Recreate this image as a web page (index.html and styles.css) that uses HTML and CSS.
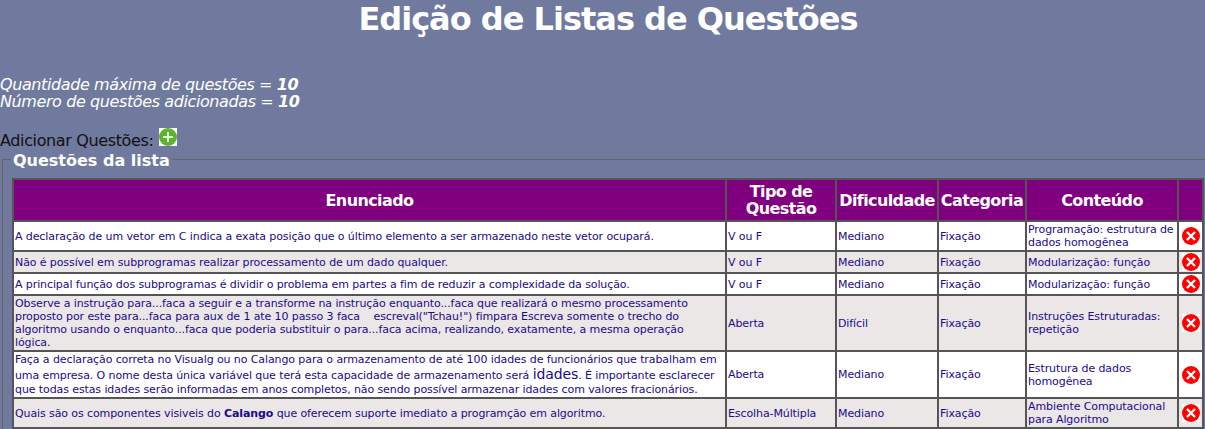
FILE: index.html
```html
<!DOCTYPE html>
<html lang="pt-BR">
<head>
    <meta charset="UTF-8">
    <title>Edição de Listas de Questões</title>
    <link rel="stylesheet" href="styles.css">
</head>
<body>

    <h1 class="title">Edição de Listas de Questões</h1>

    <p class="counts">
        Quantidade máxima de questões = <strong>10</strong><br>
        Número de questões adicionadas = <strong>10</strong>
    </p>

    <p class="add">Adicionar Questões:
        <svg class="add-icon" viewBox="0 0 18 18" width="18" height="18">
            <rect width="18" height="18" fill="#fff"/>
            <circle cx="9" cy="9" r="9" fill="#5cb531"/>
            <path d="M9 4v10M4 9h10" stroke="#e4f5da" stroke-width="2"/>
        </svg>
    </p>

    <fieldset class="box">
        <legend>Questões da lista</legend>
        <table class="questions">
            <colgroup>
                <col class="c-text"><col class="c-type"><col class="c-level"><col class="c-cat"><col class="c-subject"><col class="c-del">
            </colgroup>
            <thead>
                <tr class="head">
                    <th>Enunciado</th>
                    <th>Tipo de Questão</th>
                    <th>Dificuldade</th>
                    <th>Categoria</th>
                    <th>Conteúdo</th>
                    <th></th>
                </tr>
            </thead>
            <tbody>
                <tr class="r1">
                    <td>A declaração de um vetor em C indica a exata posição que o último elemento a ser armazenado neste vetor ocupará.</td>
                    <td>V ou F</td><td>Mediano</td><td>Fixação</td>
                    <td>Programação: estrutura de dados homogênea</td>
                    <td class="del"><svg viewBox="0 0 18 18" width="18" height="18"><rect width="18" height="18" fill="#fff"/><circle cx="9" cy="9" r="9" fill="#f00"/><path d="M5 5l8 8M13 5l-8 8" stroke="#fff" stroke-width="2.400"/></svg></td>
                </tr>
                <tr class="alt r2">
                    <td>Não é possível em subprogramas realizar processamento de um dado qualquer.</td>
                    <td>V ou F</td><td>Mediano</td><td>Fixação</td>
                    <td>Modularização: função</td>
                    <td class="del"><svg viewBox="0 0 18 18" width="18" height="18"><rect width="18" height="18" fill="#fff"/><circle cx="9" cy="9" r="9" fill="#f00"/><path d="M5 5l8 8M13 5l-8 8" stroke="#fff" stroke-width="2.400"/></svg></td>
                </tr>
                <tr class="r2">
                    <td>A principal função dos subprogramas é dividir o problema em partes a fim de reduzir a complexidade da solução.</td>
                    <td>V ou F</td><td>Mediano</td><td>Fixação</td>
                    <td>Modularização: função</td>
                    <td class="del"><svg viewBox="0 0 18 18" width="18" height="18"><rect width="18" height="18" fill="#fff"/><circle cx="9" cy="9" r="9" fill="#f00"/><path d="M5 5l8 8M13 5l-8 8" stroke="#fff" stroke-width="2.400"/></svg></td>
                </tr>
                <tr class="alt">
                    <td>Observe a instrução para...faca a seguir e a transforme na instrução enquanto...faca que realizará o mesmo processamento proposto por este para...faca para aux de 1 ate 10 passo 3 faca &nbsp;&nbsp; escreval("Tchau!") fimpara Escreva somente o trecho do algoritmo usando o enquanto...faca que poderia substituir o para...faca acima, realizando, exatamente, a mesma operação lógica.</td>
                    <td>Aberta</td><td>Difícil</td><td>Fixação</td>
                    <td>Instruções Estruturadas: repetição</td>
                    <td class="del"><svg viewBox="0 0 18 18" width="18" height="18"><rect width="18" height="18" fill="#fff"/><circle cx="9" cy="9" r="9" fill="#f00"/><path d="M5 5l8 8M13 5l-8 8" stroke="#fff" stroke-width="2.400"/></svg></td>
                </tr>
                <tr>
                    <td>Faça a declaração correta no Visualg ou no Calango para o armazenamento de até 100 idades de funcionários que trabalham em uma empresa. O nome desta única variável que terá esta capacidade de armazenamento será <span class="big">idades</span>. É importante esclarecer que todas estas idades serão informadas em anos completos, não sendo possível armazenar idades com valores fracionários.</td>
                    <td>Aberta</td><td>Mediano</td><td>Fixação</td>
                    <td>Estrutura de dados homogênea</td>
                    <td class="del"><svg viewBox="0 0 18 18" width="18" height="18"><rect width="18" height="18" fill="#fff"/><circle cx="9" cy="9" r="9" fill="#f00"/><path d="M5 5l8 8M13 5l-8 8" stroke="#fff" stroke-width="2.400"/></svg></td>
                </tr>
                <tr class="alt">
                    <td>Quais são os componentes visiveis do <strong>Calango</strong> que oferecem suporte imediato a programção em algoritmo.</td>
                    <td>Escolha-Múltipla</td><td>Mediano</td><td>Fixação</td>
                    <td>Ambiente Computacional para Algoritmo</td>
                    <td class="del"><svg viewBox="0 0 18 18" width="18" height="18"><rect width="18" height="18" fill="#fff"/><circle cx="9" cy="9" r="9" fill="#f00"/><path d="M5 5l8 8M13 5l-8 8" stroke="#fff" stroke-width="2.400"/></svg></td>
                </tr>
            </tbody>
        </table>
    </fieldset>

</body>
</html>
```

FILE: styles.css
```css
body {
    margin: 0;
    background-color: #6f7a9e;
    font-family: "DejaVu Sans", Verdana, sans-serif;
    font-size: 16px;
    color: #111;
    overflow: hidden;
}
.title {
    margin: 0;
    padding-left: 11px;
    height: 76px;
    font-size: 32px;
    line-height: 38px;
    letter-spacing: -1px;
    text-align: center;
    color: #fff;
}
.counts {
    margin: 0;
    height: 35px;
    font-size: 16px;
    line-height: 17px;
    letter-spacing: -0.4px;
    font-style: italic;
    color: #fff;
}
.add {
    margin: 0;
    padding-top: 20px;
    height: 18px;
    font-size: 16px;
    line-height: 19px;
    letter-spacing: -0.37px;
}
.add-icon {
    margin: -4px 0 0 1px;
    vertical-align: baseline;
}
.box {
    margin: 0 -10px 0 2px;
    padding: 0 1px 0 9px;
    border: 1px solid #666;
}
.box legend {
    margin-left: -1px;
    padding: 2px 2px 0;
    font-size: 16px;
    font-weight: bold;
    line-height: 19px;
    color: #fff;
}
.questions {
    width: 1190px;
    table-layout: fixed;
    border-collapse: collapse;
    margin-top: 8px;
    font-size: 11px;
    line-height: 13px;
    letter-spacing: -0.1px;
    color: #1a0a8c;
}
.c-text { width: 713px; }
.c-type { width: 110px; }
.c-level { width: 102px; }
.c-cat { width: 88px; }
.c-subject { width: 152px; }
.c-del { width: 25px; }
.questions th, .questions td {
    border: 2px solid #555;
    padding: 1px;
}
.questions th {
    height: 38px;
    background-color: #800080;
    color: #fff;
    font-size: 16px;
    line-height: 17px;
    letter-spacing: -0.6px;
}
.questions td {
    background-color: #fff;
    height: 25px;
}
.questions td:first-child {
    padding-right: 4px;
}
.questions .alt td {
    background-color: #ebe7e7;
}
.questions .r2 td {
    height: 18px;
}
.big {
    font-size: 14px;
    line-height: 17px;
}
.questions .del {
    padding: 0;
    text-align: center;
    line-height: 0;
}
```
